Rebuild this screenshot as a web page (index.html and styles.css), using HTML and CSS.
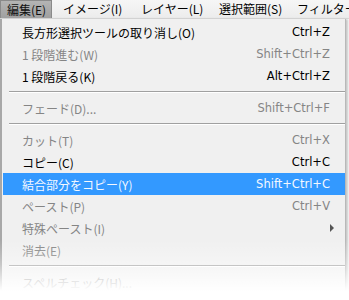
FILE: index.html
```html
<!DOCTYPE html>
<html lang="ja">
<head>
    <meta charset="UTF-8">
    <title>編集メニュー</title>
    <link rel="stylesheet" href="styles.css">
</head>
<body>
    <div class="menubar">
        <span class="top active">編集(E)</span>
        <span class="top">イメージ(I)</span>
        <span class="top">レイヤー(L)</span>
        <span class="top">選択範囲(S)</span>
        <span class="top last">フィルター(T)</span>
    </div>

    <div class="menu">
        <div class="item"><span>長方形選択ツールの取り消し(O)</span><span class="key">Ctrl+Z</span></div>
        <div class="item off"><span>1 段階進む(W)</span><span class="key">Shift+Ctrl+Z</span></div>
        <div class="item"><span>1 段階戻る(K)</span><span class="key">Alt+Ctrl+Z</span></div>
        <div class="sep"></div>
        <div class="item off"><span>フェード(D)...</span><span class="key">Shift+Ctrl+F</span></div>
        <div class="sep"></div>
        <div class="item off"><span>カット(T)</span><span class="key">Ctrl+X</span></div>
        <div class="item"><span>コピー(C)</span><span class="key">Ctrl+C</span></div>
        <div class="item hover"><span>結合部分をコピー(Y)</span><span class="key">Shift+Ctrl+C</span></div>
        <div class="item off"><span>ペースト(P)</span><span class="key">Ctrl+V</span></div>
        <div class="item off"><span>特殊ペースト(I)</span><span class="arrow"></span></div>
        <div class="item off"><span>消去(E)</span></div>
        <div class="sep"></div>
        <div class="item off"><span>スペルチェック(H)...</span></div>
    </div>
</body>
</html>
```

FILE: styles.css
```css
body {
    margin: 0;
    width: 349px;
    height: 300px;
    overflow: hidden;
    position: relative;
    background: #fff;
    font-family: "Noto Sans CJK JP", "Noto Sans", sans-serif;
    font-size: 12px;
}
.menubar {
    height: 19px;
    display: flex;
    align-items: stretch;
    overflow: hidden;
    background: linear-gradient(#f6f6f6, #ececec);
    border-bottom: 1px solid #d8d8d8;
    box-sizing: border-box;
}
.top {
    flex: 0 0 78px;
    box-sizing: border-box;
    display: flex;
    align-items: center;
    padding-left: 11px;
    color: #000;
    white-space: nowrap;
    line-height: 1;
}
.top.last {
    flex: 0 0 auto;
}
.top.active {
    flex: 0 0 52px;
    padding-left: 6px;
    background: linear-gradient(#b4b4b4, #a0a0a0);
    border: 1px solid #8a8a8a;
    border-bottom: none;
    color: #111;
}
.menu {
    width: 346px;
    background: #f0f0f0;
    border-left: 2px solid #a8a8a8;
    border-right: 1px solid #b8b8b8;
    box-shadow: 2px 0 2px #c8c8c8;
    box-sizing: border-box;
    padding: 2px 0 0 1px;
}
.item {
    height: 22px;
    display: flex;
    align-items: center;
    justify-content: space-between;
    padding: 0 15px 0 19px;
    color: #000;
    white-space: nowrap;
}
.item.off {
    color: #858585;
}
.item.hover {
    background: #3399ff;
    color: #f4f8ff;
}
.key {
    font-family: "DejaVu Sans", sans-serif;
    font-size: 11.5px;
}
.arrow {
    width: 0;
    height: 0;
    border-top: 4px solid transparent;
    border-bottom: 4px solid transparent;
    border-left: 4px solid #555;
    margin-right: -4px;
}
.sep {
    height: 1px;
    margin: 4px 0 4px 6px;
    background: #a0a0a0;
    border-bottom: 1px solid #fff;
}
body::after {
    content: "";
    position: absolute;
    left: 0;
    right: 0;
    top: 240px;
    bottom: 0;
    background: linear-gradient(rgba(255, 255, 255, 0), rgba(255, 255, 255, 0.35) 40%, #fff 85%);
}
```
